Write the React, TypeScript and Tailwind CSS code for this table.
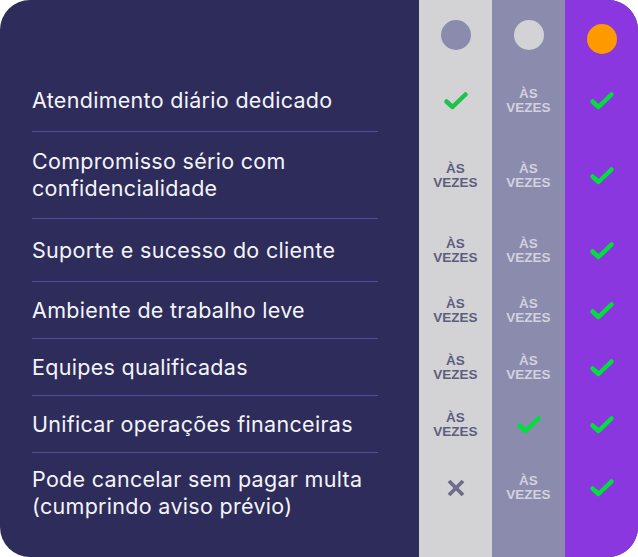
import React from 'react';

type Mark = 'check' | 'dim-check' | 'vezes' | 'x';

interface Row {
  label: string;
  h: string;
  cols: [Mark, Mark, Mark];
}

const rows: Row[] = [
  { label: 'Atendimento diário dedicado', h: 'h-[62px]', cols: ['dim-check', 'vezes', 'check'] },
  { label: 'Compromisso sério com confidencialidade', h: 'h-[87px]', cols: ['vezes', 'vezes', 'check'] },
  { label: 'Suporte e sucesso do cliente', h: 'h-[63px]', cols: ['vezes', 'vezes', 'check'] },
  { label: 'Ambiente de trabalho leve', h: 'h-[57px]', cols: ['vezes', 'vezes', 'check'] },
  { label: 'Equipes qualificadas', h: 'h-[57px]', cols: ['vezes', 'vezes', 'check'] },
  { label: 'Unificar operações financeiras', h: 'h-[57px]', cols: ['vezes', 'check', 'check'] },
  { label: 'Pode cancelar sem pagar multa (cumprindo aviso prévio)', h: 'h-[80px]', cols: ['x', 'vezes', 'check'] },
];

const colBg = ['bg-[#d3d3d5]', 'bg-[#8b8bae]', 'bg-[#8a37df]'];
const vezesColor = ['text-[#5d5d80]', 'text-[#d2d2de]', 'text-white'];

function Check({ color }: { color: string }) {
  return (
    <svg width="26" height="20" viewBox="0 0 26 20" fill="none">
      <polyline
        points="3.5,10.5 9.5,16 22.5,3.5"
        stroke={color}
        strokeWidth="4.5"
        strokeLinecap="round"
        strokeLinejoin="round"
      />
    </svg>
  );
}

function Cell({ mark, col }: { mark: Mark; col: number }) {
  if (mark === 'check' || mark === 'dim-check') {
    return <Check color={mark === 'dim-check' ? '#1fc24b' : '#00e03c'} />;
  }
  if (mark === 'x') {
    return (
      <svg width="18" height="18" viewBox="0 0 18 18" fill="none">
        <path d="M2 2 L16 16 M16 2 L2 16" stroke="#6c6c8d" strokeWidth="3.8" />
      </svg>
    );
  }
  return (
    <div
      className={`text-center font-bold text-[13.5px] leading-[14px] ${vezesColor[col]}`}
      style={{ fontFamily: '"Liberation Sans", Arial, sans-serif' }}
    >
      ÀS
      <br />
      VEZES
    </div>
  );
}

export default function App() {
  return (
    <div className="bg-white w-[638px] h-[557px]">
      <div
        className="w-[638px] h-[557px] rounded-[30px] overflow-hidden bg-[#2d2c5b] flex"
        style={{ fontFamily: 'Inter, "Noto Sans", sans-serif' }}
      >
        {/* Left: feature labels */}
        <div className="w-[419px] flex flex-col">
          <div className="h-[70px]" />
          {rows.map((r, i) => (
            <div key={i} className={`${r.h} pl-8 pr-[41px]`}>
              <div
                className={`h-full flex items-center text-[21.5px] tracking-[0.3px] leading-[27px] text-[#f4f4f8] ${
                  i < rows.length - 1 ? 'border-b border-[#4e4d9e]' : ''
                }`}
              >
                <span className={i === 1 ? 'max-w-[270px]' : i === 6 ? 'max-w-[340px]' : ''}>{r.label}</span>
              </div>
            </div>
          ))}
        </div>

        {/* Comparison columns */}
        {[0, 1, 2].map((c) => (
          <div key={c} className={`w-[73px] flex flex-col ${colBg[c]}`}>
            <div className={`h-[70px] flex justify-center ${c === 2 ? 'pt-6' : 'pt-5'}`}>
              <div
                className={`w-[30px] h-[30px] rounded-full ${
                  c === 0 ? 'bg-[#8b8bae]' : c === 1 ? 'bg-[#d3d3d5]' : 'bg-[#ff9900]'
                }`}
              />
            </div>
            {rows.map((r, i) => (
              <div
                key={i}
                className={`${r.h} flex items-center justify-center ${i === rows.length - 1 ? 'pb-[10px]' : ''}`}
              >
                <Cell mark={r.cols[c]} col={c} />
              </div>
            ))}
          </div>
        ))}
      </div>
    </div>
  );
}
